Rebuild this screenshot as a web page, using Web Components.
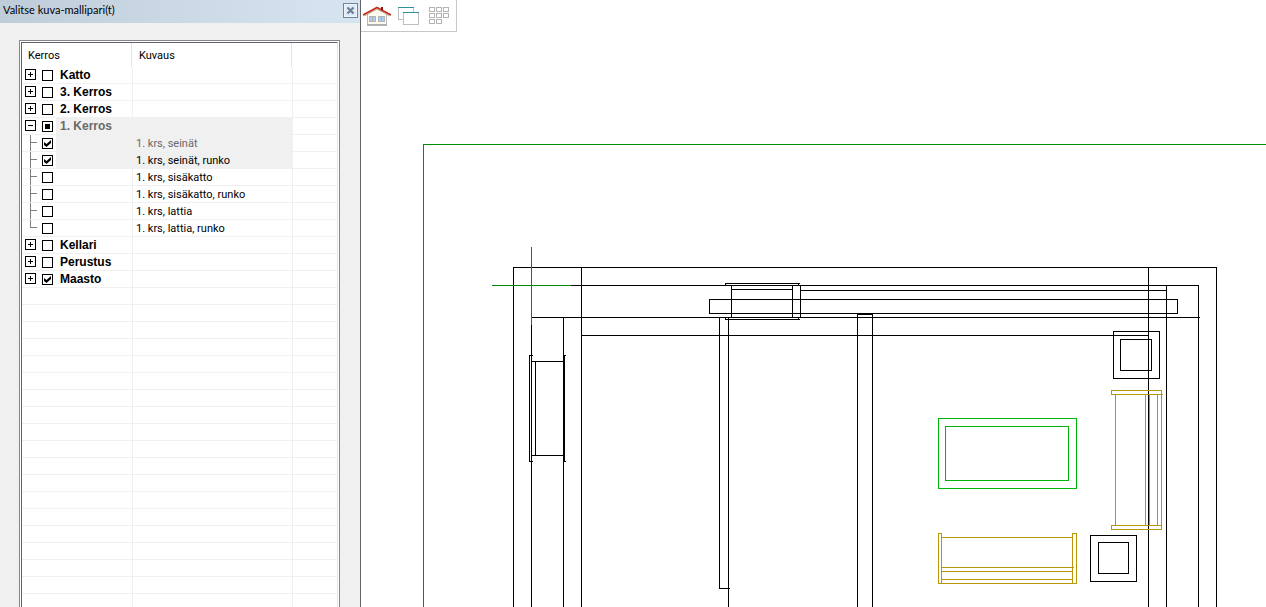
<!DOCTYPE html>
<html lang="fi">
<head>
<meta charset="utf-8">
<title>Valitse kuva-mallipari(t)</title>
<style>
  html, body { margin: 0; height: 100%; }
  body { overflow: hidden; background: #fff; color: #000; font: 11px/16px Roboto, "Liberation Sans", sans-serif; }
</style>
</head>
<body>
<app-shell>
  <tool-panel slot="side" heading="Valitse kuva-mallipari(t)">
    <layer-tree></layer-tree>
  </tool-panel>
  <view-toolbar slot="tools"></view-toolbar>
  <floor-plan></floor-plan>
</app-shell>

<script>
class BaseElement extends HTMLElement {
  connectedCallback() {
    if (this.shadowRoot) return;
    this.attachShadow({ mode: "open" }).innerHTML = this.render();
  }
}

customElements.define("app-shell", class extends BaseElement {
  render() {
    return `
      <style>
        :host { display: flex; height: 100vh; overflow: hidden; }
        main { flex: 1; min-width: 0; display: flex; position: relative; }
        .tools { position: absolute; top: 0; left: 0; }
      </style>
      <slot name="side"></slot>
      <main><slot></slot><div class="tools"><slot name="tools"></slot></div></main>`;
  }
});

customElements.define("tool-panel", class extends BaseElement {
  render() {
    return `
      <style>
        :host { display: flex; flex-direction: column; flex: none; width: 360px;
          background: #f0f0f0; border-right: 1px solid #646464; }
        header { display: flex; align-items: flex-start; justify-content: space-between;
          height: 20px; padding: 3px 2px 0 3px; background: linear-gradient(90deg, #bfcddb, #d7e4f2); }
        h1 { margin: 0; font: 11px/13px Lato, "Liberation Sans", sans-serif; }
        button { display: grid; place-items: center; width: 15px; height: 15px; padding: 0;
          border: 1px solid #72849c; background: #dfeaf6; box-shadow: inset 0 0 0 1px #eef4fb; }
        .body { flex: 1; min-height: 0; display: flex; padding: 17px 20px 0 19px; }
      </style>
      <header>
        <h1>${this.getAttribute("heading")}</h1>
        <button type="button" aria-label="Sulje">
          <svg width="9" height="9" viewBox="0 0 9 9"><path d="M1.5 1.5l6 6M7.5 1.5l-6 6" stroke="#6b7f99" stroke-width="2.2"/></svg>
        </button>
      </header>
      <div class="body"><slot></slot></div>`;
  }
});

const LAYERS = [
  { name: "Katto", state: "off" },
  { name: "3. Kerros", state: "off" },
  { name: "2. Kerros", state: "off" },
  { name: "1. Kerros", state: "mixed", open: true, selected: true, dim: true },
  { info: "1. krs, seinät", state: "on", selected: true, dim: true },
  { info: "1. krs, seinät, runko", state: "on", selected: true },
  { info: "1. krs, sisäkatto", state: "off" },
  { info: "1. krs, sisäkatto, runko", state: "off" },
  { info: "1. krs, lattia", state: "off" },
  { info: "1. krs, lattia, runko", state: "off", last: true },
  { name: "Kellari", state: "off" },
  { name: "Perustus", state: "off" },
  { name: "Maasto", state: "on" }
];

customElements.define("layer-tree", class extends BaseElement {
  row(item, i) {
    const cls = [item.selected && "selected", item.dim && "dim"].filter(Boolean).join(" ");
    const lead = item.name
      ? `<button type="button" class="${item.open ? "open" : ""}" aria-label="${item.open ? "Sulje" : "Avaa"} ${item.name}"></button>`
      : `<i class="branch ${item.last ? "last" : ""}"></i>`;
    const box = `<input type="checkbox" id="c${i}" class="${item.state}" ${item.state === "on" ? "checked" : ""}>`;
    const name = item.name ? `<label class="name" for="c${i}">${item.name}</label>` : `<span class="name"></span>`;
    const info = item.info ? `<label for="c${i}">${item.info}</label>` : "";
    return `<tr class="${cls}"><td><div class="node">${lead}${box}${name}</div></td><td class="info">${info}</td><td></td></tr>`;
  }
  render() {
    const blank = "<tr><td></td><td></td><td></td></tr>".repeat(60);
    return `
      <style>
        :host { display: block; flex: 1; min-width: 0; border: 1px solid #828790; border-bottom: 0; background: #fff; }
        .well { height: 100%; box-sizing: border-box; overflow: hidden; margin: 0 1px; padding-top: 1px; }
        .inner { height: 100%; overflow: hidden; border: 1px solid #646464; border-right-color: #e3e3e3; border-bottom: 0; }
        table { width: 100%; table-layout: fixed; border-collapse: separate; border-spacing: 0; }
        col.a { width: 111px; } col.b { width: 160px; }
        th { height: 24px; padding: 2px 6px 0; text-align: left; font-weight: normal; box-sizing: border-box;
          background: linear-gradient(#e3e3e3, #e3e3e3) right 1px top / 1px 100% no-repeat; }
        th:last-child { background: none; }
        td { height: 17px; padding: 0; box-sizing: border-box; border-right: 1px solid #f0f0f0;
          border-bottom: 1px solid #f0f0f0; white-space: nowrap; line-height: 16px; }
        td:last-child { border-right: 0; }
        .info { padding-left: 3px; }
        .info label { display: block; height: 16px; line-height: 18px; }
        .node { display: flex; align-items: flex-start; height: 16px; padding-left: 3px; }
        .name { flex: 1; padding-left: 4px; height: 16px; font: bold 12px/16px "Liberation Sans", Arial, sans-serif; }
        .selected .name, .selected .info { background: #f0f0f0; }
        .dim { color: #696969; }
        button, input { appearance: none; flex: none; width: 11px; height: 11px; padding: 0;
          border: 1px solid #000; border-radius: 0; background: #fff; }
        button { margin: 2px 6px 0 0; background:
          linear-gradient(#000, #000) center / 5px 1px no-repeat,
          linear-gradient(#000, #000) center / 1px 5px no-repeat, #fff; }
        button.open { background: linear-gradient(#000, #000) center / 5px 1px no-repeat, #fff; }
        input { display: grid; place-items: center; margin: 3px 3px 0 0; }
        input.on::before { content: ""; width: 7px; height: 7px; background: #000;
          clip-path: polygon(0 29%, 36% 57%, 100% 0, 100% 43%, 36% 100%, 0 71%); }
        input.mixed::before { content: ""; width: 5px; height: 5px; background: #000; }
        .branch { flex: none; width: 7px; height: 16px; margin: 0 5px;
          background:
            linear-gradient(#808080, #808080) 0 0 / 1px 100% no-repeat,
            linear-gradient(#808080, #808080) 0 7px / 100% 1px no-repeat; }
        .branch.last { height: 8px; }
      </style>
      <div class="well"><div class="inner"><table>
        <colgroup><col class="a"><col class="b"><col></colgroup>
        <thead><tr><th scope="col">Kerros</th><th scope="col">Kuvaus</th><th></th></tr></thead>
        <tbody>${LAYERS.map((l, i) => this.row(l, i)).join("")}${blank}</tbody>
      </table></div></div>`;
  }
  connectedCallback() {
    super.connectedCallback();
    this.shadowRoot.querySelector(".mixed").indeterminate = true;
  }
});

customElements.define("view-toolbar", class extends BaseElement {
  render() {
    const cells = [[6, 7], [13, 7], [20, 7], [6, 13], [13, 13], [20, 13], [6, 19], [13, 19]]
      .map(([x, y]) => `<rect x="${x + .5}" y="${y + .5}" width="5" height="4"/>`).join("");
    return `
      <style>
        :host { display: flex; padding-right: 2px; background: #fff;
          border: solid #c8c8c8; border-width: 0 1px 1px 0; }
        button { width: 31px; height: 31px; padding: 0; border: 0; background: none; }
        svg { display: block; }
      </style>
      <button type="button" aria-label="Talo"><svg width="31" height="31">
        <path d="M6 14L16 8l10 6v10H6z" fill="#fffbee"/>
        <path d="M6.5 14v10M25.5 14v10" stroke="#b9b9b9"/>
        <path d="M6 24h20v2H6z" fill="#b0b0b0"/>
        <path d="M8 16h7v6H8zM17 16h7v6h-7z" fill="#aacdf5"/>
        <path d="M8.5 16.5h6v5h-6zM11.5 16v6M17.5 16.5h6v5h-6zM20.5 16v6" fill="none" stroke="#b4b4b4"/>
        <path d="M3 16l13-7 13 7" fill="none" stroke="#b5a18a"/>
        <path d="M2 15L16 7.5 30 15" fill="none" stroke="#cc2a1c" stroke-width="1.6"/>
        <path d="M20 7h2v4l-2-1z" fill="#8c1713"/>
      </svg></button>
      <button type="button" aria-label="Ikkunat"><svg width="31" height="31" shape-rendering="crispEdges">
        <path d="M6.5 8v11.5h15V8" fill="#fff" stroke="#bebebe"/><path d="M6 7h16v1H6z" fill="#2b9399"/>
        <path d="M11.5 13v11.5h15V13" fill="#fff" stroke="#bebebe"/><path d="M11 12h16v1H11z" fill="#2b9399"/>
      </svg></button>
      <button type="button" aria-label="Ruudukko"><svg width="31" height="31" shape-rendering="crispEdges">
        <g fill="none" stroke="#b4b4b4">${cells}</g>
      </svg></button>`;
  }
});

customElements.define("floor-plan", class extends BaseElement {
  render() {
    const down = "V4000";
    return `
      <style>
        :host { display: block; flex: 1; min-width: 0; overflow: hidden; background: #fff; }
        svg { display: block; width: 100%; height: 100%; }
        path { fill: none; }
      </style>
      <svg role="img" aria-label="Pohjapiirros" shape-rendering="crispEdges">
        <g transform="translate(-360.5 .5)" stroke-linecap="square">
          <!-- walls -->
          <path stroke="#000" d="M513 4000V267H1216${down}M581 267${down}M1148 267${down}
            M531 4000V285H1198${down}M1166 285${down}M531 317H1199M563 317${down}M581 335H1148"/>
          <!-- window in the left wall -->
          <path stroke="#000" d="M532 355H529V461H532M565 355H564V461H565M531 361H563M531 455H563M535 361V455"/>
          <!-- door and beam in the top wall -->
          <path stroke="#000" d="M725 284V283H799M798 284V283M725 318V319H799M798 318V319
            M731 285V317M792 285V317M800 285V317M731 289H792M800 290H1166M709 299H1177V313H709Z"/>
          <!-- partitions -->
          <path stroke="#000" d="M719 317V588H729M728 317${down}M857 4000V314H872${down}"/>
          <!-- side tables -->
          <path stroke="#000" d="M1113 331H1159V378H1113ZM1120 339H1151V370H1120Z
            M1090 535H1136V581H1090ZM1098 542H1128V573H1098Z"/>
          <!-- coffee table -->
          <path stroke="#00b40a" d="M938 418H1076V488H938ZM945 426H1068V480H945Z"/>
          <!-- sofas -->
          <path stroke="#b8960a" d="M1162 394H1111V390H1161V525M1115 394V525M1145 394V525M1149 394V525M1157 394V525
            M1111 525H1161V529H1111Z
            M938 533H941V583H938ZM1072 533H1076V583H1072ZM941 537H1072M941 567H1073M941 571H1072M941 579H1072M941 583H1072"/>
          <!-- site boundary and origin mark -->
          <path stroke="#008c0a" d="M423 4000V144H9000M531 247V324M492 285H570"/>
        </g>
      </svg>`;
  }
});
</script>
</body>
</html>
